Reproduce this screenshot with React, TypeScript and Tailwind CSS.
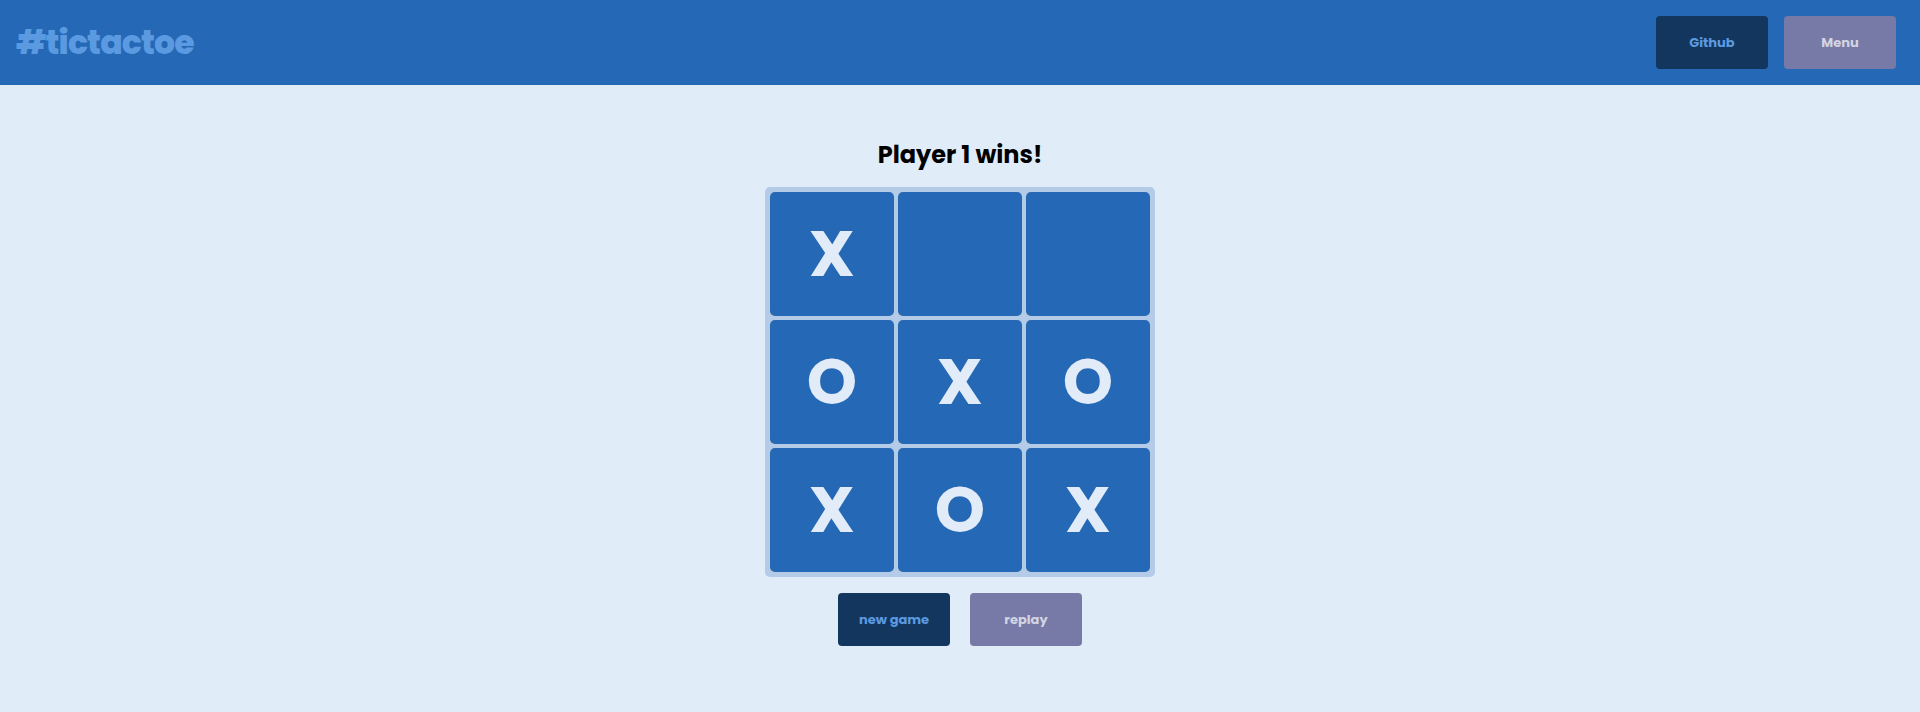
const board = ['X', '', '', 'O', 'X', 'O', 'X', 'O', 'X'];

function Cell({ value }: { value: string }) {
  return (
    <div className="w-[124px] h-[124px] bg-[#2568b5] rounded-[5px] flex items-center justify-center text-[#e1ecf8] text-[64px] font-bold leading-none">
      {value}
    </div>
  );
}

export default function App() {
  return (
    <div className="min-h-[712px] bg-[#e0ecf8] font-['Poppins','Inter',sans-serif]">
      {/* Header */}
      <header className="h-[85px] bg-[#2568b5] flex items-center justify-between pl-4 pr-6">
        <h1 className="text-[33px] font-extrabold tracking-tight text-[#5b9ae0]">#tictactoe</h1>
        <div className="flex items-center gap-4">
          <button className="w-[112px] h-[53px] rounded-[4px] bg-[#13365f] text-[#5b9ae0] text-[13px] font-bold">
            Github
          </button>
          <button className="w-[112px] h-[53px] rounded-[4px] bg-[#7779a6] text-[#d3d4e2] text-[13px] font-bold">
            Menu
          </button>
        </div>
      </header>

      {/* Game */}
      <main className="flex flex-col items-center pt-[51px]">
        <h2 className="text-[24px] leading-[38px] font-bold text-black mb-[13px]">Player 1 wins!</h2>
        <div className="w-[390px] h-[390px] bg-[#b3cbe6] rounded-[5px] p-[5px] grid grid-cols-3 gap-1">
          {board.map((v, i) => (
            <Cell key={i} value={v} />
          ))}
        </div>
        <div className="flex gap-5 mt-4">
          <button className="w-[112px] h-[53px] rounded-[4px] bg-[#13365f] text-[#5b9ae0] text-[13px] font-bold">
            new game
          </button>
          <button className="w-[112px] h-[53px] rounded-[4px] bg-[#7779a6] text-[#d3d4e2] text-[13px] font-bold">
            replay
          </button>
        </div>
      </main>
    </div>
  );
}
